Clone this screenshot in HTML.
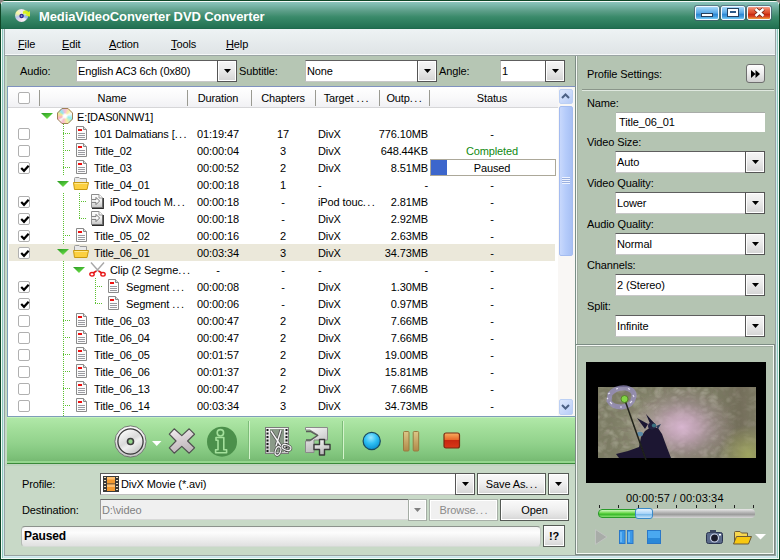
<!DOCTYPE html><html><head><meta charset="utf-8"><style>
*{box-sizing:border-box;margin:0;padding:0}
html,body{width:780px;height:560px;overflow:hidden;background:#0c3a20}
body{font-family:"Liberation Sans",sans-serif;font-size:11px;color:#000;position:relative}
.a{position:absolute}
.t{position:absolute;white-space:nowrap;line-height:13px;letter-spacing:-0.12px}
svg{position:absolute;overflow:visible}
.u{text-decoration:underline}
.combo{position:absolute;background:#fff;border:1px solid #5e5e5e;border-color:#5e5e5e #c0c0c0 #c8c8c8 #b8bcb8}
.dbtn{position:absolute;border:1px solid #555;background:linear-gradient(#f6f6f6,#ececec 40%,#dcdcdc 80%,#d4d4d4);box-shadow:inset 0 0 0 1px #fff}
.tri7{position:absolute;width:7px;height:4px;background:#000;clip-path:polygon(0 0,100% 0,50% 100%)}
.cb{position:absolute;width:12px;height:12px;border:1px solid #b0b0b0;border-radius:2px;background:#fff}
.hsep{position:absolute;top:5px;width:1px;height:15px;background:#9a9a92}
.dv{position:absolute;width:1px;background-image:linear-gradient(#5cc030 50%,transparent 50%);background-size:1px 2px}
.dh{position:absolute;height:1px;background-image:linear-gradient(90deg,#5cc030 50%,transparent 50%);background-size:2px 1px}
</style></head><body>
<div class="a" style="left:0;top:0;width:780px;height:560px;background:#b6c6b4"></div>
<div class="a" style="left:0px;top:0px;width:1px;height:560px;background:#0e4526"></div>
<div class="a" style="left:779px;top:0px;width:1px;height:560px;background:#0e4526"></div>
<div class="a" style="left:1px;top:1px;width:1px;height:558px;background:#f4fbf6"></div>
<div class="a" style="left:778px;top:1px;width:1px;height:558px;background:#f4fbf6"></div>
<div class="a" style="left:2px;top:2px;width:1px;height:556px;background:#8ec8bc"></div>
<div class="a" style="left:777px;top:2px;width:1px;height:556px;background:#8ec8bc"></div>
<div class="a" style="left:3px;top:2px;width:1px;height:556px;background:#d4ecf0"></div>
<div class="a" style="left:776px;top:2px;width:1px;height:556px;background:#d4ecf0"></div>
<div class="a" style="left:4px;top:2px;width:1px;height:556px;background:#98a2a2"></div>
<div class="a" style="left:775px;top:2px;width:1px;height:556px;background:#98a2a2"></div>
<div class="a" style="left:1px;top:559px;width:778px;height:1px;background:#0e4526"></div>
<div class="a" style="left:2px;top:558px;width:776px;height:1px;background:#f4fbf6"></div>
<div class="a" style="left:4px;top:557px;width:772px;height:1px;background:#c8e4ea"></div>
<div class="a" style="left:4px;top:556px;width:772px;height:1px;background:#d4ecf0"></div>
<div class="a" style="left:4px;top:555px;width:772px;height:1px;background:#98a2a2"></div>
<div class="a" style="left:0;top:0;width:780px;height:1px;background:#0e4526"></div>
<div class="a" style="left:1px;top:1px;width:778px;height:28px;border-radius:5px 5px 0 0;background:linear-gradient(#f4faf8 0,#f4faf8 1px,#8cc4bc 1px,#7cb8ac 4px,#5c9e88 10px,#3a8a6a 16px,#2c7c5c 22px,#227052 27px,#1a6446 28px)"></div>
<div class="a" style="left:0;top:0;width:4px;height:4px;background:linear-gradient(135deg,#8a8080 45%,transparent 55%)"></div>
<div class="a" style="left:776px;top:0;width:4px;height:4px;background:linear-gradient(225deg,#8a8080 45%,transparent 55%)"></div>
<div class="t" style="left:39px;top:9px;color:#fff;font-weight:bold;font-size:13px;line-height:16px;letter-spacing:-0.12px">MediaVideoConverter DVD Converter</div>
<div class="a" style="left:15px;top:9px;width:13px;height:13px;border-radius:50%;background:conic-gradient(from 0deg,#f0e8f8 0deg,#e8f8a0 50deg,#a8d0f0 100deg,#f8f0f8 150deg,#f0d8e8 200deg,#b8c8f0 250deg,#f8f8a0 300deg,#f0e8f8 360deg)"></div>
<svg style="left:15px;top:8px" width="16" height="16" viewBox="0 0 16 16"><path d="M8 3.5 Q11 1.5 13.5 4 L15 3 L15 8.5 L10 8 L11.8 6.5 Q10 5 8 6 Z" fill="#d8f020"/><path d="M8 7 L13 8 L12 11 L8.5 9 Z" fill="#98b0f0" opacity="0.8"/><circle cx="6.6" cy="8" r="2.3" fill="#2a2a90"/><circle cx="6.6" cy="8" r="0.9" fill="#8a8ad8"/></svg>
<div class="a" style="left:695px;top:6px;width:24px;height:14px;border-radius:2px;border:1px solid #f0f8ff;box-shadow:0 0 0 1px rgba(70,80,110,0.6);background:linear-gradient(#a8d8f8 0,#7cc0f0 25%,#58a8e6 50%,#2e88d4 62%,#3c98dc 78%,#78ccf6 100%)"></div>
<div class="a" style="left:721px;top:6px;width:24px;height:14px;border-radius:2px;border:1px solid #f0f8ff;box-shadow:0 0 0 1px rgba(70,80,110,0.6);background:linear-gradient(#a8d8f8 0,#7cc0f0 25%,#58a8e6 50%,#2e88d4 62%,#3c98dc 78%,#78ccf6 100%)"></div>
<div class="a" style="left:747px;top:6px;width:24px;height:14px;border-radius:2px;border:1px solid #f0f8ff;box-shadow:0 0 0 1px rgba(70,80,110,0.6);background:linear-gradient(#f4a088 0,#e86a4a 25%,#dc4a28 50%,#c82a10 62%,#d84020 78%,#f0a040 100%)"></div>
<div class="a" style="left:702px;top:14px;width:10px;height:2px;background:#fff;box-shadow:0 0 0 1px #24405e"></div>
<div class="a" style="left:728px;top:9px;width:10px;height:7px;background:#fff;box-shadow:0 0 0 1px #24405e"></div>
<div class="a" style="left:730px;top:11px;width:6px;height:2px;background:#2c5a88"></div>
<svg style="left:754px;top:8px" width="11" height="9" viewBox="0 0 11 9"><path d="M1.5 1 L9.5 8 M9.5 1 L1.5 8" stroke="#6a2010" stroke-width="4"/><path d="M1.5 1 L9.5 8 M9.5 1 L1.5 8" stroke="#fff" stroke-width="2.6"/></svg>
<div class="a" style="left:5px;top:29px;width:770px;height:25px;background:linear-gradient(#eef3f4,#dfe4e6)"></div>
<div class="a" style="left:5px;top:54px;width:770px;height:1px;background:#f6f8f8"></div>
<div class="a" style="left:5px;top:55px;width:770px;height:1px;background:#9aa4a4"></div>
<div class="a" style="left:5px;top:56px;width:2px;height:409px;background:#c4dac4"></div>
<div class="t" style="left:18px;top:38px"><span class="u">F</span>ile</div>
<div class="t" style="left:62px;top:38px"><span class="u">E</span>dit</div>
<div class="t" style="left:109px;top:38px"><span class="u">A</span>ction</div>
<div class="t" style="left:171px;top:38px"><span class="u">T</span>ools</div>
<div class="t" style="left:226px;top:38px"><span class="u">H</span>elp</div>
<div class="t" style="left:20px;top:65px">Audio:</div>
<div class="combo" style="left:76px;top:60px;width:161px;height:22px"></div>
<div class="t" style="left:78px;top:65px">English AC3 6ch (0x80)</div>
<div class="dbtn" style="left:217px;top:60px;width:20px;height:22px"></div>
<div class="tri7" style="left:224px;top:69px"></div>
<div class="t" style="left:239px;top:65px">Subtitle:</div>
<div class="combo" style="left:305px;top:60px;width:132px;height:22px"></div>
<div class="t" style="left:307px;top:65px">None</div>
<div class="dbtn" style="left:417px;top:60px;width:20px;height:22px"></div>
<div class="tri7" style="left:424px;top:69px"></div>
<div class="t" style="left:439px;top:65px">Angle:</div>
<div class="combo" style="left:500px;top:60px;width:65px;height:22px"></div>
<div class="t" style="left:502px;top:65px">1</div>
<div class="dbtn" style="left:545px;top:60px;width:20px;height:22px"></div>
<div class="tri7" style="left:552px;top:69px"></div>
<div class="a" style="left:575px;top:56px;width:1px;height:499px;background:#7c8c84"></div>
<div class="a" style="left:576px;top:56px;width:1px;height:499px;background:#f4f8f4"></div>
<div class="a" style="left:7px;top:86px;width:569px;height:331px;background:#fff;border:1px solid #7f9db9;border-top-color:#8092c0;border-right-color:#7a9088"></div>
<div class="a" style="left:8px;top:87px;width:550px;height:21px;background:linear-gradient(#ffffff,#fafafb 45%,#f1f1f4);border-bottom:1px solid #d6d6d8"></div>
<div class="cb" style="left:18px;top:92px"></div>
<div class="hsep" style="left:39px;top:90px;height:16px"></div>
<div class="hsep" style="left:187px;top:90px;height:16px"></div>
<div class="hsep" style="left:251px;top:90px;height:16px"></div>
<div class="hsep" style="left:315px;top:90px;height:16px"></div>
<div class="hsep" style="left:379px;top:90px;height:16px"></div>
<div class="hsep" style="left:429px;top:90px;height:16px"></div>
<div class="t" style="left:52px;width:120px;text-align:center;top:92px">Name</div>
<div class="t" style="left:158px;width:120px;text-align:center;top:92px">Duration</div>
<div class="t" style="left:223px;width:120px;text-align:center;top:92px">Chapters</div>
<div class="t" style="left:286px;width:120px;text-align:center;top:92px">Target <span style="letter-spacing:1.4px">..</span>.</div>
<div class="t" style="left:344px;width:120px;text-align:center;top:92px">Outp<span style="letter-spacing:1.4px">..</span>.</div>
<div class="t" style="left:432px;width:120px;text-align:center;top:92px">Status</div>
<div class="a" style="left:9px;top:244px;width:546px;height:17px;background:#ebe8da"></div>
<div class="dv" style="left:63px;top:124px;height:52px"></div>
<div class="dv" style="left:63px;top:193px;height:51px"></div>
<div class="dv" style="left:63px;top:261px;height:155px"></div>
<div class="dv" style="left:79px;top:193px;height:26px"></div>
<div class="dv" style="left:95px;top:278px;height:26px"></div>
<svg style="left:41px;top:113px" width="12" height="6" viewBox="0 0 12 6"><defs><linearGradient id="tg" x1="0" y1="0" x2="0.6" y2="1"><stop offset="0" stop-color="#2a9a22"/><stop offset="0.6" stop-color="#50c438"/><stop offset="1" stop-color="#78e050"/></linearGradient></defs><path d="M0 0 H12 L6 6 Z" fill="url(#tg)"/></svg>
<div class="a" style="left:57px;top:108px;width:16px;height:16px;clip-path:polygon(31% 0,69% 0,100% 31%,100% 69%,69% 100%,31% 100%,0 69%,0 31%);background:radial-gradient(circle at 50% 50%,#fff 0,#fff 12%,transparent 30%),conic-gradient(from 0deg,#f8b8d8 0deg,#f8f0a0 40deg,#f8f8f8 70deg,#90f0f0 110deg,#f8f0a0 160deg,#f8b8d0 200deg,#f8f8f0 230deg,#f8b0c8 250deg,#f0e890 290deg,#90e8f0 320deg,#f8b8d8 360deg)"></div><svg style="left:57px;top:108px" width="16" height="16" viewBox="0 0 16 16"><path d="M5 0.5 H11 L15.5 5 V11 L11 15.5 H5 L0.5 11 V5 Z" fill="none" stroke="#a08058"/></svg>
<div class="t" style="left:77px;top:111px">E:[DAS0NNW1]</div>
<div class="cb" style="left:18px;top:128px"></div>
<div class="dh" style="left:63px;top:133px;width:7px"></div>
<svg style="left:76px;top:126px" width="11" height="14" viewBox="0 0 11 14"><path d="M0.5 0.5 H7.5 L10.5 3.5 V13.5 H0.5 Z" fill="#fbfbfb" stroke="#8a8a8a"/><path d="M7.5 0.5 V3.5 H10.5" fill="#ddd" stroke="#8a8a8a"/><rect x="2" y="3" width="4" height="2" fill="#ee1010"/><path d="M2 7.5 H9 M2 9.5 H9 M2 11.5 H9" stroke="#9a9aa0"/></svg>
<div class="t" style="left:94px;top:128px">101 Dalmatians [<span style="letter-spacing:1.4px">..</span>.</div>
<div class="t" style="left:178px;width:80px;text-align:center;top:128px">01:19:47</div>
<div class="t" style="left:253px;width:60px;text-align:center;top:128px">17</div>
<div class="t" style="left:318px;top:128px">DivX</div>
<div class="t" style="left:330px;width:98px;text-align:right;top:128px">776.10MB</div>
<div class="t" style="left:432px;width:120px;text-align:center;top:128px">-</div>
<div class="cb" style="left:18px;top:145px"></div>
<div class="dh" style="left:63px;top:150px;width:7px"></div>
<svg style="left:76px;top:143px" width="11" height="14" viewBox="0 0 11 14"><path d="M0.5 0.5 H7.5 L10.5 3.5 V13.5 H0.5 Z" fill="#fbfbfb" stroke="#8a8a8a"/><path d="M7.5 0.5 V3.5 H10.5" fill="#ddd" stroke="#8a8a8a"/><rect x="2" y="3" width="4" height="2" fill="#ee1010"/><path d="M2 7.5 H9 M2 9.5 H9 M2 11.5 H9" stroke="#9a9aa0"/></svg>
<div class="t" style="left:94px;top:145px">Title_02</div>
<div class="t" style="left:178px;width:80px;text-align:center;top:145px">00:00:04</div>
<div class="t" style="left:253px;width:60px;text-align:center;top:145px">3</div>
<div class="t" style="left:318px;top:145px">DivX</div>
<div class="t" style="left:330px;width:98px;text-align:right;top:145px">648.44KB</div>
<div class="t" style="left:432px;width:120px;text-align:center;top:145px;color:#108a10">Completed</div>
<div class="cb" style="left:18px;top:162px"><svg style="left:1px;top:1px" width="10" height="10" viewBox="0 0 10 10"><path d="M2 4.8 L4 6.8 L7.9 2.6" stroke="#000" stroke-width="2.2" fill="none" stroke-linecap="square"/></svg></div>
<div class="dh" style="left:63px;top:167px;width:7px"></div>
<svg style="left:76px;top:160px" width="11" height="14" viewBox="0 0 11 14"><path d="M0.5 0.5 H7.5 L10.5 3.5 V13.5 H0.5 Z" fill="#fbfbfb" stroke="#8a8a8a"/><path d="M7.5 0.5 V3.5 H10.5" fill="#ddd" stroke="#8a8a8a"/><rect x="2" y="3" width="4" height="2" fill="#ee1010"/><path d="M2 7.5 H9 M2 9.5 H9 M2 11.5 H9" stroke="#9a9aa0"/></svg>
<div class="t" style="left:94px;top:162px">Title_03</div>
<div class="t" style="left:178px;width:80px;text-align:center;top:162px">00:00:52</div>
<div class="t" style="left:253px;width:60px;text-align:center;top:162px">2</div>
<div class="t" style="left:318px;top:162px">DivX</div>
<div class="t" style="left:330px;width:98px;text-align:right;top:162px">8.51MB</div>
<div class="a" style="left:430px;top:159px;width:126px;height:17px;border:1px solid #aca899;background:#fff"></div>
<div class="a" style="left:431px;top:160px;width:16px;height:15px;background:#3c66cc"></div>
<div class="t" style="left:432px;width:120px;text-align:center;top:162px">Paused</div>
<svg style="left:57px;top:181px" width="12" height="6" viewBox="0 0 12 6"><defs><linearGradient id="tg" x1="0" y1="0" x2="0.6" y2="1"><stop offset="0" stop-color="#2a9a22"/><stop offset="0.6" stop-color="#50c438"/><stop offset="1" stop-color="#78e050"/></linearGradient></defs><path d="M0 0 H12 L6 6 Z" fill="url(#tg)"/></svg>
<svg style="left:73px;top:177px" width="16" height="13" viewBox="0 0 16 13"><path d="M1.5 5 V1.5 Q1.5 0.5 2.5 0.5 H6 L7 1.5 H13.5 V5" fill="#e8e8e8" stroke="#9a9a9a"/><path d="M0.5 5.5 H15.5 L14 12.5 H1.5 Z" fill="#fcd040" stroke="#c89a10"/><path d="M1.5 6.5 H14.5" stroke="#ffe88a"/></svg>
<div class="t" style="left:94px;top:179px">Title_04_01</div>
<div class="t" style="left:178px;width:80px;text-align:center;top:179px">00:00:18</div>
<div class="t" style="left:253px;width:60px;text-align:center;top:179px">1</div>
<div class="t" style="left:318px;top:179px">-</div>
<div class="t" style="left:330px;width:98px;text-align:right;top:179px">-</div>
<div class="t" style="left:432px;width:120px;text-align:center;top:179px">-</div>
<div class="cb" style="left:18px;top:196px"><svg style="left:1px;top:1px" width="10" height="10" viewBox="0 0 10 10"><path d="M2 4.8 L4 6.8 L7.9 2.6" stroke="#000" stroke-width="2.2" fill="none" stroke-linecap="square"/></svg></div>
<div class="dh" style="left:79px;top:201px;width:7px"></div>
<svg style="left:91px;top:194px" width="13" height="15" viewBox="0 0 13 15"><defs><linearGradient id="pg" x1="0" y1="0" x2="0" y2="1"><stop offset="0" stop-color="#fdfdfd"/><stop offset="0.5" stop-color="#f0f0f0"/><stop offset="1" stop-color="#c4c4c4"/></linearGradient></defs><path d="M0.5 0.5 H8 L11.5 4 V13.5 H0.5 Z" fill="url(#pg)" stroke="#8c8c8c"/><path d="M8 0.5 V4 H11.5" fill="#fff" stroke="#9a9a9a"/><path d="M12.3 4 V14.3 H1" fill="none" stroke="#2a2a2a" stroke-width="1.2"/><path d="M0.8 5.6 H5 V3.4 L8.6 7 L5 10.6 V8.4 H0.8" fill="#fafafa" stroke="#6c6c6c" stroke-width="0.9"/></svg>
<div class="t" style="left:110px;top:196px">iPod touch M<span style="letter-spacing:1.4px">..</span>.</div>
<div class="t" style="left:178px;width:80px;text-align:center;top:196px">00:00:18</div>
<div class="t" style="left:253px;width:60px;text-align:center;top:196px">-</div>
<div class="t" style="left:318px;top:196px">iPod touc<span style="letter-spacing:1.4px">..</span>.</div>
<div class="t" style="left:330px;width:98px;text-align:right;top:196px">2.81MB</div>
<div class="t" style="left:432px;width:120px;text-align:center;top:196px">-</div>
<div class="cb" style="left:18px;top:213px"><svg style="left:1px;top:1px" width="10" height="10" viewBox="0 0 10 10"><path d="M2 4.8 L4 6.8 L7.9 2.6" stroke="#000" stroke-width="2.2" fill="none" stroke-linecap="square"/></svg></div>
<div class="dh" style="left:79px;top:218px;width:7px"></div>
<svg style="left:91px;top:211px" width="13" height="15" viewBox="0 0 13 15"><defs><linearGradient id="pg" x1="0" y1="0" x2="0" y2="1"><stop offset="0" stop-color="#fdfdfd"/><stop offset="0.5" stop-color="#f0f0f0"/><stop offset="1" stop-color="#c4c4c4"/></linearGradient></defs><path d="M0.5 0.5 H8 L11.5 4 V13.5 H0.5 Z" fill="url(#pg)" stroke="#8c8c8c"/><path d="M8 0.5 V4 H11.5" fill="#fff" stroke="#9a9a9a"/><path d="M12.3 4 V14.3 H1" fill="none" stroke="#2a2a2a" stroke-width="1.2"/><path d="M0.8 5.6 H5 V3.4 L8.6 7 L5 10.6 V8.4 H0.8" fill="#fafafa" stroke="#6c6c6c" stroke-width="0.9"/></svg>
<div class="t" style="left:110px;top:213px">DivX Movie</div>
<div class="t" style="left:178px;width:80px;text-align:center;top:213px">00:00:18</div>
<div class="t" style="left:253px;width:60px;text-align:center;top:213px">-</div>
<div class="t" style="left:318px;top:213px">DivX</div>
<div class="t" style="left:330px;width:98px;text-align:right;top:213px">2.92MB</div>
<div class="t" style="left:432px;width:120px;text-align:center;top:213px">-</div>
<div class="cb" style="left:18px;top:230px"><svg style="left:1px;top:1px" width="10" height="10" viewBox="0 0 10 10"><path d="M2 4.8 L4 6.8 L7.9 2.6" stroke="#000" stroke-width="2.2" fill="none" stroke-linecap="square"/></svg></div>
<div class="dh" style="left:63px;top:235px;width:7px"></div>
<svg style="left:76px;top:228px" width="11" height="14" viewBox="0 0 11 14"><path d="M0.5 0.5 H7.5 L10.5 3.5 V13.5 H0.5 Z" fill="#fbfbfb" stroke="#8a8a8a"/><path d="M7.5 0.5 V3.5 H10.5" fill="#ddd" stroke="#8a8a8a"/><rect x="2" y="3" width="4" height="2" fill="#ee1010"/><path d="M2 7.5 H9 M2 9.5 H9 M2 11.5 H9" stroke="#9a9aa0"/></svg>
<div class="t" style="left:94px;top:230px">Title_05_02</div>
<div class="t" style="left:178px;width:80px;text-align:center;top:230px">00:00:16</div>
<div class="t" style="left:253px;width:60px;text-align:center;top:230px">2</div>
<div class="t" style="left:318px;top:230px">DivX</div>
<div class="t" style="left:330px;width:98px;text-align:right;top:230px">2.63MB</div>
<div class="t" style="left:432px;width:120px;text-align:center;top:230px">-</div>
<div class="cb" style="left:18px;top:247px"><svg style="left:1px;top:1px" width="10" height="10" viewBox="0 0 10 10"><path d="M2 4.8 L4 6.8 L7.9 2.6" stroke="#000" stroke-width="2.2" fill="none" stroke-linecap="square"/></svg></div>
<svg style="left:57px;top:249px" width="12" height="6" viewBox="0 0 12 6"><defs><linearGradient id="tg" x1="0" y1="0" x2="0.6" y2="1"><stop offset="0" stop-color="#2a9a22"/><stop offset="0.6" stop-color="#50c438"/><stop offset="1" stop-color="#78e050"/></linearGradient></defs><path d="M0 0 H12 L6 6 Z" fill="url(#tg)"/></svg>
<svg style="left:73px;top:245px" width="16" height="13" viewBox="0 0 16 13"><path d="M1.5 5 V1.5 Q1.5 0.5 2.5 0.5 H6 L7 1.5 H13.5 V5" fill="#e8e8e8" stroke="#9a9a9a"/><path d="M0.5 5.5 H15.5 L14 12.5 H1.5 Z" fill="#fcd040" stroke="#c89a10"/><path d="M1.5 6.5 H14.5" stroke="#ffe88a"/></svg>
<div class="t" style="left:94px;top:247px">Title_06_01</div>
<div class="t" style="left:178px;width:80px;text-align:center;top:247px">00:03:34</div>
<div class="t" style="left:253px;width:60px;text-align:center;top:247px">3</div>
<div class="t" style="left:318px;top:247px">DivX</div>
<div class="t" style="left:330px;width:98px;text-align:right;top:247px">34.73MB</div>
<div class="t" style="left:432px;width:120px;text-align:center;top:247px">-</div>
<svg style="left:73px;top:267px" width="12" height="6" viewBox="0 0 12 6"><defs><linearGradient id="tg" x1="0" y1="0" x2="0.6" y2="1"><stop offset="0" stop-color="#2a9a22"/><stop offset="0.6" stop-color="#50c438"/><stop offset="1" stop-color="#78e050"/></linearGradient></defs><path d="M0 0 H12 L6 6 Z" fill="url(#tg)"/></svg>
<svg style="left:89px;top:262px" width="17" height="15" viewBox="0 0 17 15"><path d="M2 0.5 L9.5 9 M15 0.5 L7.5 9" stroke="#a8a8a8" stroke-width="1.4"/><path d="M7.5 9 L4 11" stroke="#e01010" stroke-width="1.6"/><path d="M9.5 9 L13 11" stroke="#e01010" stroke-width="1.6"/><ellipse cx="3" cy="12.3" rx="2.2" ry="1.8" fill="none" stroke="#e81818" stroke-width="1.4"/><ellipse cx="14" cy="12.3" rx="2.2" ry="1.8" fill="none" stroke="#e81818" stroke-width="1.4"/></svg>
<div class="t" style="left:110px;top:264px">Clip (2 Segme<span style="letter-spacing:1.4px">..</span>.</div>
<div class="t" style="left:178px;width:80px;text-align:center;top:264px">-</div>
<div class="t" style="left:253px;width:60px;text-align:center;top:264px">-</div>
<div class="t" style="left:318px;top:264px">-</div>
<div class="t" style="left:330px;width:98px;text-align:right;top:264px">-</div>
<div class="t" style="left:432px;width:120px;text-align:center;top:264px">-</div>
<div class="cb" style="left:18px;top:281px"><svg style="left:1px;top:1px" width="10" height="10" viewBox="0 0 10 10"><path d="M2 4.8 L4 6.8 L7.9 2.6" stroke="#000" stroke-width="2.2" fill="none" stroke-linecap="square"/></svg></div>
<div class="dh" style="left:95px;top:286px;width:7px"></div>
<svg style="left:108px;top:279px" width="11" height="14" viewBox="0 0 11 14"><path d="M0.5 0.5 H7.5 L10.5 3.5 V13.5 H0.5 Z" fill="#fbfbfb" stroke="#8a8a8a"/><path d="M7.5 0.5 V3.5 H10.5" fill="#ddd" stroke="#8a8a8a"/><rect x="2" y="3" width="4" height="2" fill="#ee1010"/><path d="M2 7.5 H9 M2 9.5 H9 M2 11.5 H9" stroke="#9a9aa0"/></svg>
<div class="t" style="left:126px;top:281px">Segment <span style="letter-spacing:1.4px">..</span>.</div>
<div class="t" style="left:178px;width:80px;text-align:center;top:281px">00:00:08</div>
<div class="t" style="left:253px;width:60px;text-align:center;top:281px">-</div>
<div class="t" style="left:318px;top:281px">DivX</div>
<div class="t" style="left:330px;width:98px;text-align:right;top:281px">1.30MB</div>
<div class="t" style="left:432px;width:120px;text-align:center;top:281px">-</div>
<div class="cb" style="left:18px;top:298px"><svg style="left:1px;top:1px" width="10" height="10" viewBox="0 0 10 10"><path d="M2 4.8 L4 6.8 L7.9 2.6" stroke="#000" stroke-width="2.2" fill="none" stroke-linecap="square"/></svg></div>
<div class="dh" style="left:95px;top:303px;width:7px"></div>
<svg style="left:108px;top:296px" width="11" height="14" viewBox="0 0 11 14"><path d="M0.5 0.5 H7.5 L10.5 3.5 V13.5 H0.5 Z" fill="#fbfbfb" stroke="#8a8a8a"/><path d="M7.5 0.5 V3.5 H10.5" fill="#ddd" stroke="#8a8a8a"/><rect x="2" y="3" width="4" height="2" fill="#ee1010"/><path d="M2 7.5 H9 M2 9.5 H9 M2 11.5 H9" stroke="#9a9aa0"/></svg>
<div class="t" style="left:126px;top:298px">Segment <span style="letter-spacing:1.4px">..</span>.</div>
<div class="t" style="left:178px;width:80px;text-align:center;top:298px">00:00:06</div>
<div class="t" style="left:253px;width:60px;text-align:center;top:298px">-</div>
<div class="t" style="left:318px;top:298px">DivX</div>
<div class="t" style="left:330px;width:98px;text-align:right;top:298px">0.97MB</div>
<div class="t" style="left:432px;width:120px;text-align:center;top:298px">-</div>
<div class="cb" style="left:18px;top:315px"></div>
<div class="dh" style="left:63px;top:320px;width:7px"></div>
<svg style="left:76px;top:313px" width="11" height="14" viewBox="0 0 11 14"><path d="M0.5 0.5 H7.5 L10.5 3.5 V13.5 H0.5 Z" fill="#fbfbfb" stroke="#8a8a8a"/><path d="M7.5 0.5 V3.5 H10.5" fill="#ddd" stroke="#8a8a8a"/><rect x="2" y="3" width="4" height="2" fill="#ee1010"/><path d="M2 7.5 H9 M2 9.5 H9 M2 11.5 H9" stroke="#9a9aa0"/></svg>
<div class="t" style="left:94px;top:315px">Title_06_03</div>
<div class="t" style="left:178px;width:80px;text-align:center;top:315px">00:00:47</div>
<div class="t" style="left:253px;width:60px;text-align:center;top:315px">2</div>
<div class="t" style="left:318px;top:315px">DivX</div>
<div class="t" style="left:330px;width:98px;text-align:right;top:315px">7.66MB</div>
<div class="t" style="left:432px;width:120px;text-align:center;top:315px">-</div>
<div class="cb" style="left:18px;top:332px"></div>
<div class="dh" style="left:63px;top:337px;width:7px"></div>
<svg style="left:76px;top:330px" width="11" height="14" viewBox="0 0 11 14"><path d="M0.5 0.5 H7.5 L10.5 3.5 V13.5 H0.5 Z" fill="#fbfbfb" stroke="#8a8a8a"/><path d="M7.5 0.5 V3.5 H10.5" fill="#ddd" stroke="#8a8a8a"/><rect x="2" y="3" width="4" height="2" fill="#ee1010"/><path d="M2 7.5 H9 M2 9.5 H9 M2 11.5 H9" stroke="#9a9aa0"/></svg>
<div class="t" style="left:94px;top:332px">Title_06_04</div>
<div class="t" style="left:178px;width:80px;text-align:center;top:332px">00:00:47</div>
<div class="t" style="left:253px;width:60px;text-align:center;top:332px">2</div>
<div class="t" style="left:318px;top:332px">DivX</div>
<div class="t" style="left:330px;width:98px;text-align:right;top:332px">7.66MB</div>
<div class="t" style="left:432px;width:120px;text-align:center;top:332px">-</div>
<div class="cb" style="left:18px;top:349px"></div>
<div class="dh" style="left:63px;top:354px;width:7px"></div>
<svg style="left:76px;top:347px" width="11" height="14" viewBox="0 0 11 14"><path d="M0.5 0.5 H7.5 L10.5 3.5 V13.5 H0.5 Z" fill="#fbfbfb" stroke="#8a8a8a"/><path d="M7.5 0.5 V3.5 H10.5" fill="#ddd" stroke="#8a8a8a"/><rect x="2" y="3" width="4" height="2" fill="#ee1010"/><path d="M2 7.5 H9 M2 9.5 H9 M2 11.5 H9" stroke="#9a9aa0"/></svg>
<div class="t" style="left:94px;top:349px">Title_06_05</div>
<div class="t" style="left:178px;width:80px;text-align:center;top:349px">00:01:57</div>
<div class="t" style="left:253px;width:60px;text-align:center;top:349px">2</div>
<div class="t" style="left:318px;top:349px">DivX</div>
<div class="t" style="left:330px;width:98px;text-align:right;top:349px">19.00MB</div>
<div class="t" style="left:432px;width:120px;text-align:center;top:349px">-</div>
<div class="cb" style="left:18px;top:366px"></div>
<div class="dh" style="left:63px;top:371px;width:7px"></div>
<svg style="left:76px;top:364px" width="11" height="14" viewBox="0 0 11 14"><path d="M0.5 0.5 H7.5 L10.5 3.5 V13.5 H0.5 Z" fill="#fbfbfb" stroke="#8a8a8a"/><path d="M7.5 0.5 V3.5 H10.5" fill="#ddd" stroke="#8a8a8a"/><rect x="2" y="3" width="4" height="2" fill="#ee1010"/><path d="M2 7.5 H9 M2 9.5 H9 M2 11.5 H9" stroke="#9a9aa0"/></svg>
<div class="t" style="left:94px;top:366px">Title_06_06</div>
<div class="t" style="left:178px;width:80px;text-align:center;top:366px">00:01:37</div>
<div class="t" style="left:253px;width:60px;text-align:center;top:366px">2</div>
<div class="t" style="left:318px;top:366px">DivX</div>
<div class="t" style="left:330px;width:98px;text-align:right;top:366px">15.81MB</div>
<div class="t" style="left:432px;width:120px;text-align:center;top:366px">-</div>
<div class="cb" style="left:18px;top:383px"></div>
<div class="dh" style="left:63px;top:388px;width:7px"></div>
<svg style="left:76px;top:381px" width="11" height="14" viewBox="0 0 11 14"><path d="M0.5 0.5 H7.5 L10.5 3.5 V13.5 H0.5 Z" fill="#fbfbfb" stroke="#8a8a8a"/><path d="M7.5 0.5 V3.5 H10.5" fill="#ddd" stroke="#8a8a8a"/><rect x="2" y="3" width="4" height="2" fill="#ee1010"/><path d="M2 7.5 H9 M2 9.5 H9 M2 11.5 H9" stroke="#9a9aa0"/></svg>
<div class="t" style="left:94px;top:383px">Title_06_13</div>
<div class="t" style="left:178px;width:80px;text-align:center;top:383px">00:00:47</div>
<div class="t" style="left:253px;width:60px;text-align:center;top:383px">2</div>
<div class="t" style="left:318px;top:383px">DivX</div>
<div class="t" style="left:330px;width:98px;text-align:right;top:383px">7.66MB</div>
<div class="t" style="left:432px;width:120px;text-align:center;top:383px">-</div>
<div class="cb" style="left:18px;top:400px"></div>
<div class="dh" style="left:63px;top:405px;width:7px"></div>
<svg style="left:76px;top:398px" width="11" height="14" viewBox="0 0 11 14"><path d="M0.5 0.5 H7.5 L10.5 3.5 V13.5 H0.5 Z" fill="#fbfbfb" stroke="#8a8a8a"/><path d="M7.5 0.5 V3.5 H10.5" fill="#ddd" stroke="#8a8a8a"/><rect x="2" y="3" width="4" height="2" fill="#ee1010"/><path d="M2 7.5 H9 M2 9.5 H9 M2 11.5 H9" stroke="#9a9aa0"/></svg>
<div class="t" style="left:94px;top:400px">Title_06_14</div>
<div class="t" style="left:178px;width:80px;text-align:center;top:400px">00:03:34</div>
<div class="t" style="left:253px;width:60px;text-align:center;top:400px">3</div>
<div class="t" style="left:318px;top:400px">DivX</div>
<div class="t" style="left:330px;width:98px;text-align:right;top:400px">34.73MB</div>
<div class="t" style="left:432px;width:120px;text-align:center;top:400px">-</div>
<div class="a" style="left:558px;top:87px;width:17px;height:329px;background:#f9f7f5"></div>
<div class="a" style="left:559px;top:89px;width:14px;height:15px;border-radius:2px;background:linear-gradient(135deg,#dfe8fc,#b8cdf8);border:1px solid #bcd0f4"></div>
<svg style="left:561px;top:93px" width="9" height="6" viewBox="0 0 9 6"><path d="M1 5 L4.5 1.5 L8 5" stroke="#4d6185" stroke-width="2" fill="none"/></svg>
<div class="a" style="left:559px;top:106px;width:14px;height:150px;border-radius:2px;background:linear-gradient(90deg,#c8d8fc,#b4cbfa 50%,#a8c0f4);border:1px solid #a4bcf0"></div>
<div class="a" style="left:562px;top:177px;width:8px;height:7px;background:repeating-linear-gradient(#eef3ff 0,#eef3ff 1px,#9ab0e0 1px,#9ab0e0 2px)"></div>
<div class="a" style="left:559px;top:399px;width:14px;height:16px;border-radius:2px;background:linear-gradient(135deg,#dfe8fc,#b8cdf8);border:1px solid #bcd0f4"></div>
<svg style="left:561px;top:404px" width="9" height="6" viewBox="0 0 9 6"><path d="M1 1 L4.5 4.5 L8 1" stroke="#4d6185" stroke-width="2" fill="none"/></svg>
<div class="a" style="left:7px;top:417px;width:568px;height:47px;background:linear-gradient(#c4f2bc 0,#c4f2bc 1px,#b0e8a8 1px,#a2de9a 12px,#92d28c 26px,#80c47c 38px,#76ba72 44px,#94d68e 44px,#94d68e 46px,#3a8a3a 46px,#3a8a3a 47px)"></div>
<div class="a" style="left:5px;top:464px;width:570px;height:2px;background:#bfd3bf"></div>
<div class="a" style="left:248px;top:421px;width:1px;height:38px;background:#7cbc78"></div>
<div class="a" style="left:249px;top:421px;width:1px;height:38px;background:#d4f4cc"></div>
<div class="a" style="left:342px;top:421px;width:1px;height:38px;background:#7cbc78"></div>
<div class="a" style="left:343px;top:421px;width:1px;height:38px;background:#d4f4cc"></div>
<svg style="left:114px;top:425px" width="34" height="34" viewBox="0 0 34 34"><defs>
<linearGradient id="dg1" x1="0" y1="0" x2="0" y2="1"><stop offset="0" stop-color="#fbfbfb"/><stop offset="0.5" stop-color="#e4e4e4"/><stop offset="1" stop-color="#c4c4c4"/></linearGradient>
<linearGradient id="dg2" x1="0.2" y1="0" x2="0.8" y2="1"><stop offset="0" stop-color="#ffffff"/><stop offset="0.45" stop-color="#dadada"/><stop offset="0.6" stop-color="#f0f0f0"/><stop offset="1" stop-color="#c0c0c0"/></linearGradient></defs>
<circle cx="16.5" cy="16.5" r="15.6" fill="url(#dg1)" stroke="#6a6a6a" stroke-width="0.9"/>
<circle cx="16.5" cy="16.5" r="12.6" fill="url(#dg2)" stroke="#3a3a3a" stroke-width="1.3"/>
<circle cx="16.5" cy="16.5" r="3" fill="#94d48c" stroke="#3e3e3e" stroke-width="1.6"/>
</svg>
<svg style="left:152px;top:441px" width="10" height="6" viewBox="0 0 10 6"><path d="M0 0 H9.5 L4.75 5 Z" fill="#fff"/></svg>
<svg style="left:169px;top:428px" width="27" height="26" viewBox="0 0 27 26"><defs><linearGradient id="xg" x1="0" y1="0" x2="0.3" y2="1"><stop offset="0" stop-color="#f6f2f4"/><stop offset="0.5" stop-color="#d8d0d4"/><stop offset="1" stop-color="#c0b8bc"/></linearGradient></defs>
<path d="M5.2 0.8 L12.8 7.6 L20.2 0.8 L25.5 6.2 L18.6 13 L25.5 19.8 L20.2 25.2 L12.8 18.4 L5.2 25.2 L0.3 19.8 L7 13 L0.3 6.2 Z" fill="url(#xg)" stroke="#505050" stroke-width="1.2" stroke-linejoin="round"/></svg>
<svg style="left:206px;top:426px" width="32" height="32" viewBox="0 0 32 32">
<circle cx="16" cy="15.7" r="15" fill="#4b904b"/>
<circle cx="14.4" cy="6.8" r="3.2" fill="#4b904b" stroke="#a4e09c" stroke-width="1.6"/>
<path d="M10 11.5 H17.8 V23.8 H20.6 V26.8 H9.6 V23.8 H12 V14.2 H10 Z" fill="#4b904b" stroke="#a4e09c" stroke-width="1.6" stroke-linejoin="round"/></svg>
<svg style="left:265px;top:427px" width="28" height="30" viewBox="0 0 28 30"><defs><linearGradient id="fg" x1="0" y1="0" x2="0" y2="1"><stop offset="0" stop-color="#f4f4f4"/><stop offset="1" stop-color="#c8c8c8"/></linearGradient></defs>
<rect x="0.5" y="0.5" width="23" height="26" fill="url(#fg)" stroke="#7a7a7a"/>
<rect x="5" y="2" width="14" height="23" fill="#8a9a88"/>
<path d="M1.5 3h2M1.5 6.5h2M1.5 10h2M1.5 13.5h2M1.5 17h2M1.5 20.5h2M1.5 24h2M20.5 3h2M20.5 6.5h2M20.5 10h2M20.5 13.5h2M20.5 17h2M20.5 20.5h2M20.5 24h2" stroke="#181818" stroke-width="2"/>
<path d="M6 4 L16 19 M16 3 L11 19" stroke="#505050" stroke-width="3"/><path d="M6 4 L16 19 M16 3 L11 19" stroke="#f4f4f4" stroke-width="1.4"/>
<ellipse cx="13" cy="24" rx="2.6" ry="4.4" transform="rotate(20 13 24)" fill="none" stroke="#505050" stroke-width="2.8"/><ellipse cx="13" cy="24" rx="2.6" ry="4.4" transform="rotate(20 13 24)" fill="none" stroke="#f4f4f4" stroke-width="1.2"/>
<ellipse cx="21.5" cy="20.5" rx="4.6" ry="2.6" transform="rotate(20 21.5 20.5)" fill="none" stroke="#505050" stroke-width="2.8"/><ellipse cx="21.5" cy="20.5" rx="4.6" ry="2.6" transform="rotate(20 21.5 20.5)" fill="none" stroke="#f4f4f4" stroke-width="1.2"/>
</svg>
<svg style="left:305px;top:427px" width="27" height="29" viewBox="0 0 27 29"><defs><linearGradient id="ag" x1="0" y1="0" x2="0.4" y2="1"><stop offset="0" stop-color="#fcfcfc"/><stop offset="1" stop-color="#b8b8b8"/></linearGradient></defs>
<path d="M0.5 0.5 H22.5 V13 H9 V25.5 H0.5 V14 H5 L13 8 L5 3 H0.5 Z" fill="url(#ag)" stroke="#8a8a8a" stroke-width="1"/>
<path d="M1 4.5 H5.5 L12.5 8.5 L5.5 13 H1" fill="none" stroke="#5a5a5a" stroke-width="1.3"/>
<path d="M14.5 12.5 H19.5 V17.5 H25 V22.5 H19.5 V28 H14.5 V22.5 H9 V17.5 H14.5 Z" fill="url(#ag)" stroke="#3a3a3a" stroke-width="1.4" stroke-linejoin="round"/>
</svg>
<svg style="left:362px;top:431px" width="20" height="20" viewBox="0 0 20 20"><defs><radialGradient id="rg" cx="45%" cy="30%" r="70%"><stop offset="0" stop-color="#9ae8ff"/><stop offset="0.5" stop-color="#30c0f4"/><stop offset="1" stop-color="#0890d0"/></radialGradient></defs><circle cx="9.7" cy="10" r="8.6" fill="url(#rg)" stroke="#1a4a60" stroke-width="1.2"/></svg>
<svg style="left:403px;top:431px" width="17" height="21" viewBox="0 0 17 21"><defs><linearGradient id="pz" x1="0" y1="0" x2="0" y2="1"><stop offset="0" stop-color="#dcc888"/><stop offset="1" stop-color="#b08848"/></linearGradient></defs><rect x="0.5" y="0.5" width="5.5" height="19.5" rx="1" fill="url(#pz)" stroke="#9a7a40"/><rect x="10.2" y="0.5" width="5.5" height="19.5" rx="1" fill="url(#pz)" stroke="#9a7a40"/></svg>
<svg style="left:443px;top:432px" width="18" height="17" viewBox="0 0 18 17"><defs><linearGradient id="sg" x1="0" y1="0" x2="0" y2="1"><stop offset="0" stop-color="#f8b060"/><stop offset="0.45" stop-color="#e86828"/><stop offset="0.5" stop-color="#c82810"/><stop offset="1" stop-color="#d83818"/></linearGradient></defs><rect x="1" y="1" width="15.5" height="15" rx="2" fill="url(#sg)" stroke="#7a2a10" stroke-width="1.2"/></svg>
<div class="a" style="left:5px;top:466px;width:570px;height:89px;background:#c8d9c7"></div>
<div class="t" style="left:22px;top:478px">Profile:</div>
<div class="t" style="left:22px;top:504px">Destination:</div>
<div class="a" style="left:100px;top:473px;width:375px;height:22px;background:#fff;border:1px solid #777;border-color:#5a5a5a #a0a0a0 #c0c0c0 #5a5a5a"></div>
<svg style="left:103px;top:476px" width="16" height="16" viewBox="0 0 16 16"><rect x="0" y="0" width="16" height="16" fill="#3a3a3a"/><path d="M1 1.5h2M1 4.5h2M1 7.5h2M1 10.5h2M1 13.5h2M13 1.5h2M13 4.5h2M13 7.5h2M13 10.5h2M13 13.5h2" stroke="#f0e0c0" stroke-width="1.2"/><rect x="4" y="1" width="8" height="6.5" fill="#f49a30"/><rect x="4" y="8.5" width="8" height="6.5" fill="#f49a30"/><rect x="4" y="1" width="8" height="2.5" fill="#ffc070"/><rect x="4" y="8.5" width="8" height="2.5" fill="#ffc070"/></svg>
<div class="t" style="left:121px;top:478px">DivX Movie (*.avi)</div>
<div class="dbtn" style="left:455px;top:473px;width:20px;height:22px"></div>
<div class="tri7" style="left:462px;top:482px"></div>
<div class="a" style="left:477px;top:473px;width:69px;height:22px;border:1px solid #555a55;box-shadow:inset 0 0 0 1px #fff;background:linear-gradient(#fafafa,#f0f0f0 45%,#dedede 85%,#d2d2d2)"></div>
<div class="t" style="left:477px;width:69px;text-align:center;top:478px;color:#000;">Save As<span style="letter-spacing:1.4px">..</span>.</div>
<div class="a" style="left:548px;top:473px;width:21px;height:22px;border:1px solid #555a55;box-shadow:inset 0 0 0 1px #fff;background:linear-gradient(#fafafa,#f0f0f0 45%,#dedede 85%,#d2d2d2)"></div>
<div class="tri7" style="left:555px;top:482px"></div>
<div class="a" style="left:100px;top:499px;width:326px;height:21px;background:#f0f0f0;border:1px solid #999;border-color:#6a6a6a #c8c8c8 #d8d8d8 #9a9a9a"></div>
<div class="t" style="left:102px;top:504px;color:#808080">D:\video</div>
<div class="a" style="left:408px;top:499px;width:19px;height:22px;background:#f2f2f2;border:1px solid #a4aca4;box-shadow:inset 0 0 0 1px #fff"></div>
<div class="tri7" style="left:414px;top:508px;background:#808080"></div>
<div class="a" style="left:429px;top:499px;width:69px;height:22px;border:1px solid #a8b0a8;box-shadow:inset 0 0 0 1px #fff;background:#f0f0f0"></div>
<div class="t" style="left:429px;width:69px;text-align:center;top:504px;color:#8a8a8a;">Browse<span style="letter-spacing:1.4px">..</span>.</div>
<div class="a" style="left:500px;top:499px;width:69px;height:22px;border:1px solid #555a55;box-shadow:inset 0 0 0 1px #fff;background:linear-gradient(#fafafa,#f0f0f0 45%,#dedede 85%,#d2d2d2)"></div>
<div class="t" style="left:500px;width:69px;text-align:center;top:504px;color:#000;">Open</div>
<div class="a" style="left:21px;top:526px;width:520px;height:21px;border-radius:4px;border:1px solid #c8d0c8;border-color:#8c928c #c0c6c0 #d4dad4 #b4bab4;background:linear-gradient(#f4f4f4,#fdfdfd 30%,#f0f0f0 60%,#e0e0e0)"></div>
<div class="t" style="left:24px;top:530px;font-weight:bold;font-size:12px">Paused</div>
<div class="a" style="left:543px;top:525px;width:22px;height:22px;border:1px solid #555a55;box-shadow:inset 0 0 0 1px #fff;background:linear-gradient(#fafafa,#f0f0f0 45%,#dedede 85%,#d2d2d2)"></div>
<div class="t" style="left:543px;width:22px;text-align:center;top:530px;color:#000;"><b>!?</b></div>
<div class="a" style="left:577px;top:56px;width:198px;height:499px;background:#b4c4b2"></div>
<div class="a" style="left:577px;top:56px;width:1px;height:499px;background:#a0aca0"></div>
<div class="t" style="left:587px;top:68px">Profile Settings:</div>
<div class="a" style="left:746px;top:64px;width:19px;height:19px;border:1px solid #6e6e6e;border-radius:3px;background:linear-gradient(#ffffff,#ededed 50%,#d0d0d0)"></div>
<svg style="left:751px;top:70px" width="10" height="8" viewBox="0 0 10 8"><path d="M0 0 L4.5 4 L0 8 Z M4.5 0 L9 4 L4.5 8 Z" fill="#000"/></svg>
<div class="a" style="left:582px;top:89px;width:192px;height:1px;background:#8a968a"></div>
<div class="a" style="left:582px;top:90px;width:192px;height:1px;background:#dfe8df"></div>
<div class="t" style="left:587px;top:97px">Name:</div>
<div class="a" style="left:616px;top:112px;width:149px;height:20px;background:#fff;border-top:1px solid #a8aca8"></div>
<div class="t" style="left:619px;top:116px">Title_06_01</div>
<div class="t" style="left:587px;top:136px">Video Size:</div>
<div class="combo" style="left:615px;top:151px;width:150px;height:22px"></div>
<div class="t" style="left:617px;top:156px">Auto</div>
<div class="dbtn" style="left:745px;top:151px;width:20px;height:22px"></div>
<div class="tri7" style="left:752px;top:160px"></div>
<div class="t" style="left:587px;top:177px">Video Quality:</div>
<div class="combo" style="left:615px;top:192px;width:150px;height:22px"></div>
<div class="t" style="left:617px;top:197px">Lower</div>
<div class="dbtn" style="left:745px;top:192px;width:20px;height:22px"></div>
<div class="tri7" style="left:752px;top:201px"></div>
<div class="t" style="left:587px;top:218px">Audio Quality:</div>
<div class="combo" style="left:615px;top:233px;width:150px;height:22px"></div>
<div class="t" style="left:617px;top:238px">Normal</div>
<div class="dbtn" style="left:745px;top:233px;width:20px;height:22px"></div>
<div class="tri7" style="left:752px;top:242px"></div>
<div class="t" style="left:587px;top:259px">Channels:</div>
<div class="combo" style="left:615px;top:274px;width:150px;height:22px"></div>
<div class="t" style="left:617px;top:279px">2 (Stereo)</div>
<div class="dbtn" style="left:745px;top:274px;width:20px;height:22px"></div>
<div class="tri7" style="left:752px;top:283px"></div>
<div class="t" style="left:587px;top:300px">Split:</div>
<div class="combo" style="left:615px;top:315px;width:150px;height:22px"></div>
<div class="t" style="left:617px;top:320px">Infinite</div>
<div class="dbtn" style="left:745px;top:315px;width:20px;height:22px"></div>
<div class="tri7" style="left:752px;top:324px"></div>
<div class="a" style="left:575px;top:344px;width:200px;height:1px;background:#7c8c84"></div>
<div class="a" style="left:576px;top:345px;width:198px;height:1px;background:#f4f8f4"></div>
<div class="a" style="left:577px;top:346px;width:196px;height:1px;background:#a0aca0"></div>
<div class="a" style="left:773px;top:345px;width:1px;height:209px;background:#f4f8f4"></div>
<div class="a" style="left:774px;top:345px;width:1px;height:210px;background:#7c8c84"></div>
<div class="a" style="left:576px;top:553px;width:198px;height:1px;background:#f4f8f4"></div>
<div class="a" style="left:575px;top:554px;width:200px;height:1px;background:#7c8c84"></div>
<div class="a" style="left:586px;top:362px;width:180px;height:121px;background:#000"></div>
<svg style="left:598px;top:387px" width="158" height="71" viewBox="0 0 158 71"><defs>
<radialGradient id="vp" cx="84" cy="40" r="44" gradientUnits="userSpaceOnUse" gradientTransform="translate(84 40) scale(1.25 0.95) translate(-84 -40)"><stop offset="0" stop-color="#e2bcdc" stop-opacity="0.9"/><stop offset="0.3" stop-color="#d4aecc" stop-opacity="0.7"/><stop offset="0.65" stop-color="#bc9cb4" stop-opacity="0.3"/><stop offset="1" stop-color="#b898a8" stop-opacity="0"/></radialGradient>
<linearGradient id="vr" x1="0" y1="0" x2="1" y2="0"><stop offset="0" stop-color="#6a6452" stop-opacity="0"/><stop offset="0.7" stop-color="#6a6452" stop-opacity="0"/><stop offset="0.9" stop-color="#6a6050" stop-opacity="0.5"/><stop offset="1" stop-color="#7a7460" stop-opacity="0.45"/></linearGradient>
<radialGradient id="vgb" cx="150" cy="68" r="30" gradientUnits="userSpaceOnUse"><stop offset="0" stop-color="#a8b060" stop-opacity="0.8"/><stop offset="1" stop-color="#a8b060" stop-opacity="0"/></radialGradient>
<radialGradient id="vl" cx="52" cy="40" r="40" gradientUnits="userSpaceOnUse"><stop offset="0" stop-color="#b4b49c" stop-opacity="0.55"/><stop offset="1" stop-color="#a4a688" stop-opacity="0"/></radialGradient>
<filter id="tex" x="0" y="0" width="158" height="71" filterUnits="userSpaceOnUse"><feTurbulence type="turbulence" baseFrequency="0.09 0.12" numOctaves="2" seed="7" result="n"/><feColorMatrix in="n" values="0 0 0 0 0.92  0 0 0 0 0.9  0 0 0 0 0.8  1.8 0 0 0 -0.3"/></filter>
<filter id="tex2" x="0" y="0" width="158" height="71" filterUnits="userSpaceOnUse"><feTurbulence type="fractalNoise" baseFrequency="0.16 0.2" numOctaves="2" seed="11" result="n"/><feColorMatrix in="n" values="0 0 0 0 0.22  0 0 0 0 0.2  0 0 0 0 0.14  0 -6 0 0 2.9"/></filter>
<filter id="blur1"><feGaussianBlur stdDeviation="0.6"/></filter>
</defs>
<rect width="158" height="71" fill="#7c7c64"/>
<rect width="158" height="71" fill="url(#vl)"/>
<rect width="158" height="71" filter="url(#tex2)" opacity="0.75"/>
<rect width="158" height="71" filter="url(#tex)" opacity="0.28"/>
<rect width="158" height="71" fill="url(#vr)"/>
<rect width="158" height="71" fill="url(#vgb)"/>
<rect width="158" height="71" fill="url(#vp)"/>
<g filter="url(#blur1)">
<path d="M12 7 Q18 0 28 1 Q37 3 36 10 Q34 19 24 20 Q14 20 11 14 Z" fill="none" stroke="#9a92c8" stroke-width="5" opacity="0.7"/>
<path d="M10 7 L12 6 M18 2 L20 1.5 M30 1.5 L32 2.5 M35 8 L36 10 M12 15 L14 17 M22 20 L24 20 M32 16 L34 14 M9 11 L10 12" stroke="#f4f0ff" stroke-width="1.1" opacity="0.85"/>
<path d="M21 71 L18 67 L30 64 L41 60 L43 50 L47 44 L53 40 L60 41 L64 47 L68 58 L73 71 Z" fill="#1c1830"/>
<path d="M47 42 L39 31 L50 37 Z M53 39 L48 27 L57 37 Z" fill="#1a1630"/>
<ellipse cx="54" cy="39" rx="4" ry="3.5" fill="#242040"/>
<ellipse cx="56" cy="38.5" rx="2.2" ry="2" fill="#3a7080"/>
<path d="M58 39 L63 37 L60 42 Z" fill="#2a3858"/>
<ellipse cx="42" cy="47" rx="3" ry="2.2" fill="#5a8aa8"/>
<path d="M26.5 12 L48 73" stroke="#20221a" stroke-width="1.5"/>
<circle cx="26.5" cy="12" r="3.5" fill="#82d444"/>
<circle cx="26.5" cy="12" r="3.5" fill="none" stroke="#4a7820" stroke-width="0.8"/>
</g>
</svg>
<div class="t" style="left:626px;top:492px;letter-spacing:0.15px">00:00:57 / 00:03:34</div>
<div class="a" style="left:599px;top:505px;width:1px;height:3px;background:#222"></div>
<div class="a" style="left:618px;top:505px;width:1px;height:3px;background:#222"></div>
<div class="a" style="left:638px;top:505px;width:1px;height:3px;background:#222"></div>
<div class="a" style="left:657px;top:505px;width:1px;height:3px;background:#222"></div>
<div class="a" style="left:676px;top:505px;width:1px;height:3px;background:#222"></div>
<div class="a" style="left:696px;top:505px;width:1px;height:3px;background:#222"></div>
<div class="a" style="left:715px;top:505px;width:1px;height:3px;background:#222"></div>
<div class="a" style="left:734px;top:505px;width:1px;height:3px;background:#222"></div>
<div class="a" style="left:753px;top:505px;width:1px;height:3px;background:#222"></div>
<div class="a" style="left:598px;top:509px;width:157px;height:9px;border-radius:4px;background:linear-gradient(#e8e8e8,#b4b4b4 40%,#9c9c9c 60%,#d8d8d8);"></div>
<div class="a" style="left:598px;top:509px;width:42px;height:9px;border-radius:4px 0 0 4px;border:1px solid #2a9a2a;background:linear-gradient(#d0f8c0,#6ad84a 45%,#38b828 60%,#88e070)"></div>
<div class="a" style="left:635px;top:508px;width:18px;height:11px;border-radius:3px;border:1px solid #3a8ac8;background:linear-gradient(#e8f4ff,#a8d4f8 50%,#78b8e8 60%,#c8e4fa)"></div>
<svg style="left:595px;top:529px" width="13" height="16" viewBox="0 0 13 16"><path d="M0.5 0.5 L12 8 L0.5 15.5 Z" fill="#a8aca8" stroke="#c0c4c0"/></svg>
<svg style="left:619px;top:530px" width="15" height="14" viewBox="0 0 15 14"><rect x="0.5" y="0.5" width="5.5" height="13" fill="#3a98e8" stroke="#2a78c8"/><rect x="8.5" y="0.5" width="5.5" height="13" fill="#3a98e8" stroke="#2a78c8"/><path d="M2 2V12M10 2V12" stroke="#8cd0ff"/></svg>
<svg style="left:647px;top:530px" width="14" height="14" viewBox="0 0 14 14"><rect x="0.5" y="0.5" width="13" height="13" fill="#4aa8f0" stroke="#2a78c8"/><rect x="1" y="8" width="12" height="5" fill="#2a88d8"/></svg>
<svg style="left:706px;top:529px" width="18" height="16" viewBox="0 0 18 16"><rect x="0.5" y="3.5" width="16" height="11" rx="2" fill="#5a6a8a" stroke="#2a3450"/><rect x="4" y="1" width="6" height="3" fill="#3a4460"/><circle cx="8.5" cy="9" r="4" fill="#1a1a2a" stroke="#c8d0e8" stroke-width="1.2"/><rect x="13" y="5" width="2" height="1.5" fill="#fff"/></svg>
<svg style="left:733px;top:530px" width="19" height="15" viewBox="0 0 19 15"><path d="M1.5 13 V2.5 Q1.5 1.5 2.5 1.5 H7 L8.5 3 H14.5 V6" fill="#f8d850" stroke="#6a5a3a"/><path d="M0.5 14 L3.5 6.5 H18.5 L15.5 14 Z" fill="#f8c810" stroke="#6a5a3a"/></svg>
<svg style="left:755px;top:534px" width="11" height="6" viewBox="0 0 11 6"><path d="M0 0 H11 L5.5 5.5 Z" fill="#fff"/></svg>
</body></html>
